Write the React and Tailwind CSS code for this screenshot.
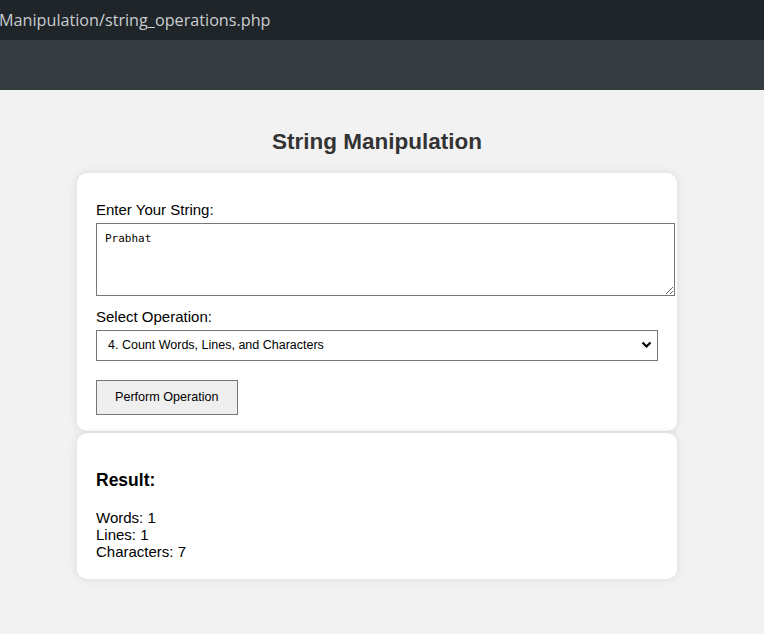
import React, { useState } from 'react';

function App() {
  const [text, setText] = useState('Prabhat');
  const [op, setOp] = useState('4');

  return (
    <div className="min-h-[634px] bg-[#f2f2f2] font-['Liberation_Sans',Arial,sans-serif]">
      {/* browser address strip */}
      <div className="h-[40px] bg-[#202529] flex items-center overflow-hidden">
        <div className="-ml-[1px] whitespace-nowrap text-[16.2px] text-[#c9ced1] font-['Open_Sans',sans-serif]">
          Manipulation/string_operations.php
        </div>
      </div>
      <div className="h-[50px] bg-[#353c3f]" />

      <div className="flex flex-col items-center pr-[10px]">
        <h2 className="mt-[38px] text-[22.5px] leading-[28px] font-bold text-[#333]">String Manipulation</h2>

        <div className="mt-[17px] w-[600px] bg-white rounded-[10px] shadow-[0_0_10px_rgba(0,0,0,0.1)] px-[19px] pt-[28px] pb-[16px]">
          <label className="block text-[15px] leading-[18px] text-black">Enter Your String:</label>
          <textarea
            value={text}
            onChange={(e) => setText(e.target.value)}
            className="mt-[4px] block w-[579px] h-[73px] border border-[#767676] bg-white px-[8px] pt-[8px] pb-[6px] font-['DejaVu_Sans_Mono',monospace] text-[11px] leading-[14px] text-black outline-none"
          />

          <label className="mt-[12px] block text-[15px] leading-[18px] text-black">Select Operation:</label>
          <div className="relative mt-[4px] w-[562px]">
            <select
              value={op}
              onChange={(e) => setOp(e.target.value)}
              className="appearance-none block w-full h-[31px] border border-[#767676] bg-white pl-[11px] pr-[30px] text-[12.5px] text-black outline-none"
            >
              <option value="1">1. Reverse String</option>
              <option value="2">2. Convert to Uppercase</option>
              <option value="3">3. Convert to Lowercase</option>
              <option value="4">4. Count Words, Lines, and Characters</option>
            </select>
            <svg className="absolute right-[6px] top-[11px] pointer-events-none" width="11" height="8" viewBox="0 0 11 8">
              <path d="M1.5 1.5 L5.5 5.5 L9.5 1.5" fill="none" stroke="#000" strokeWidth="2.2" />
            </svg>
          </div>

          <button className="mt-[19px] block h-[35px] px-[18px] bg-[#efefef] border border-[#767676] text-[12.6px] text-black">
            Perform Operation
          </button>
        </div>

        <div className="mt-[2px] w-[600px] bg-white rounded-[10px] shadow-[0_0_10px_rgba(0,0,0,0.1)] px-[19px] pt-[36px] pb-[19px]">
          <h3 className="text-[17.5px] leading-[22px] font-bold text-black">Result:</h3>
          <div className="mt-[18px] text-[15px] leading-[17px] text-black">
            <div>Words: 1</div>
            <div>Lines: 1</div>
            <div>Characters: 7</div>
          </div>
        </div>
      </div>
    </div>
  );
}

export default App;
